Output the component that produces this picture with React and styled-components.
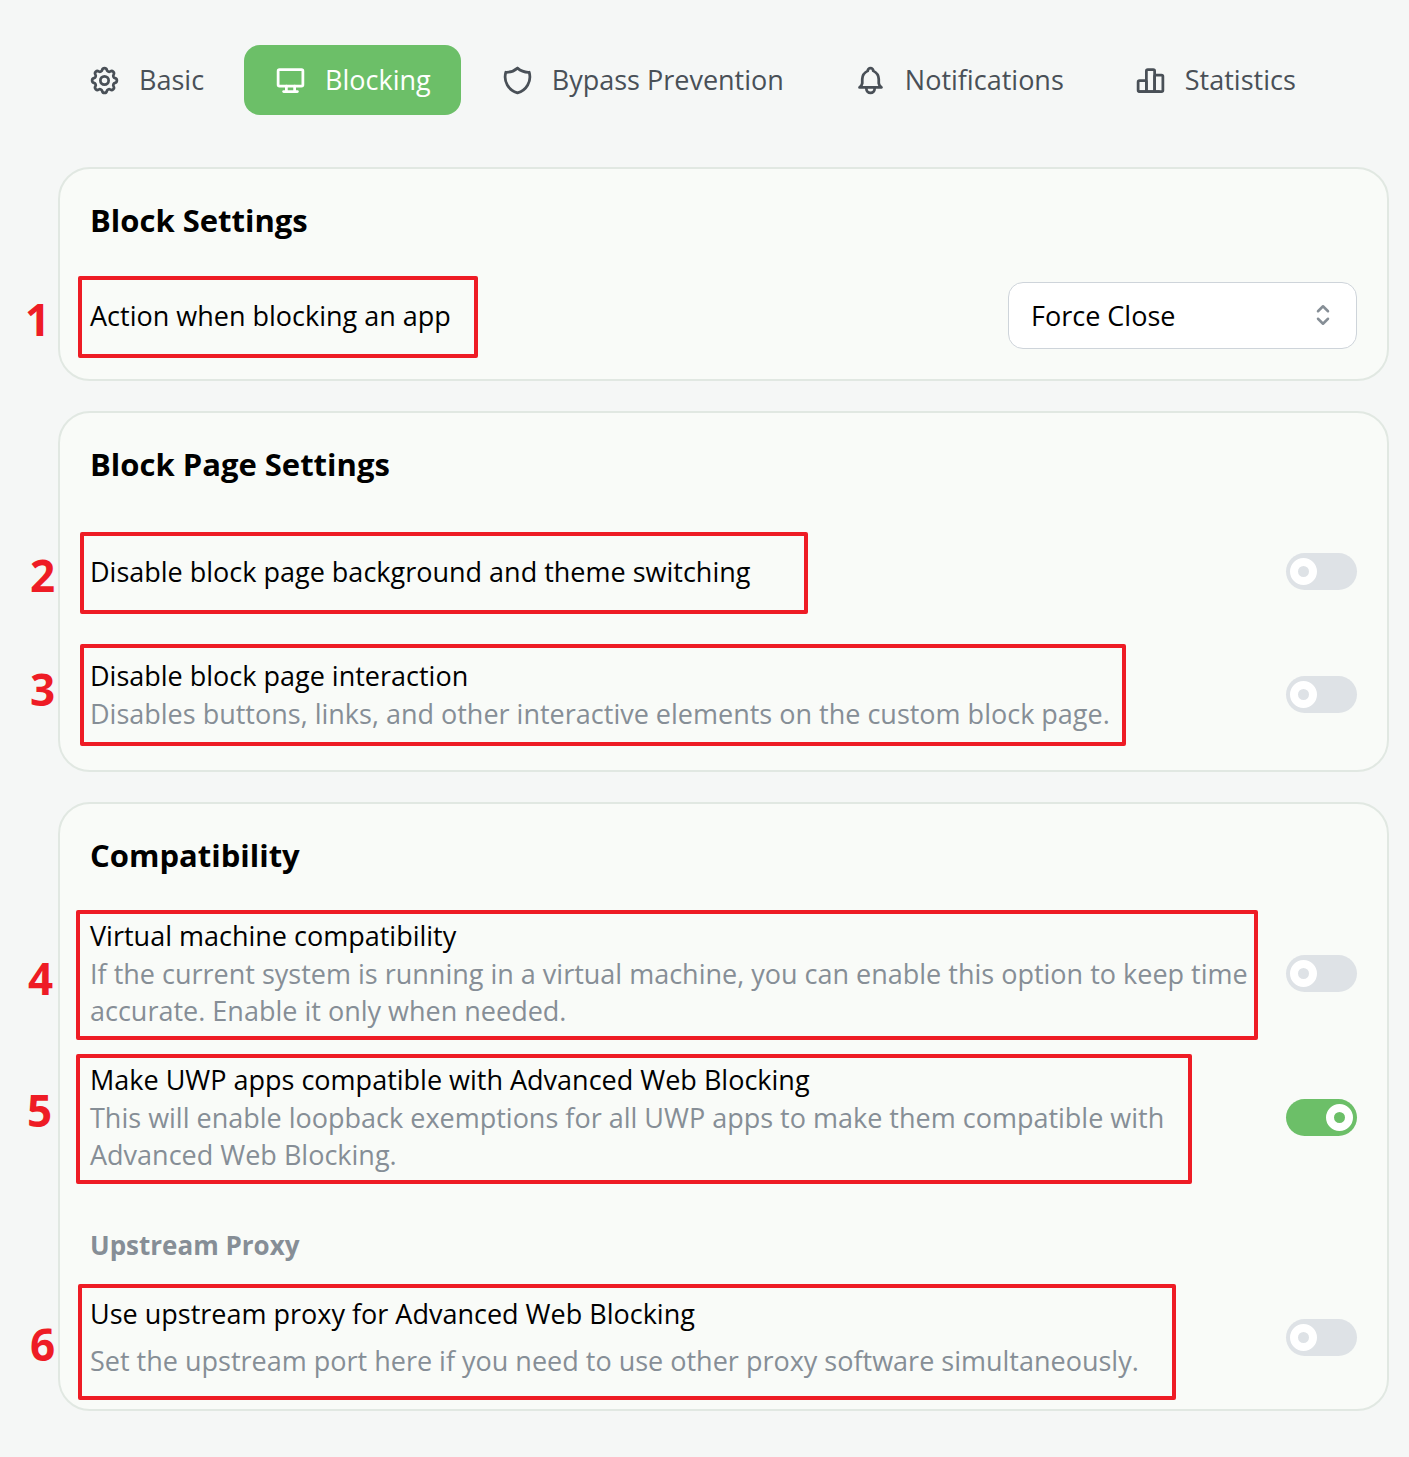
import React, { useState } from "react";
import styled, { createGlobalStyle } from "styled-components";
import {
  TbSettings,
  TbDeviceDesktop,
  TbShield,
  TbBell,
  TbChartBar,
  TbSelector,
} from "react-icons/tb";

const GlobalStyle = createGlobalStyle`
  *,
  *::before {
    box-sizing: border-box;
  }
  body {
    margin: 0;
    background: #f5f7f6;
    color: #000;
    font-family: "Segoe UI", "Open Sans", "Noto Sans", sans-serif;
    font-size: 27px;
    line-height: 38px;
  }
  button,
  select {
    font: inherit;
  }
`;

const Page = styled.main`
  padding: 45px 20px 46px 58px;
`;

const Tabs = styled.nav`
  display: flex;
  gap: 10px;
  margin-bottom: 52px;
`;

const Tab = styled.button`
  display: flex;
  align-items: center;
  gap: 18px;
  height: 70px;
  padding: 0 30px;
  border: 0;
  border-radius: 16px;
  background: ${({ $active }) => ($active ? "#6cbf68" : "transparent")};
  color: ${({ $active }) => ($active ? "#fff" : "#495057")};
  white-space: nowrap;
  cursor: pointer;
  svg {
    flex: none;
    width: 33px;
    height: 33px;
  }
`;

const Sections = styled.div`
  display: flex;
  flex-direction: column;
  gap: 30px;
`;

const Card = styled.section`
  padding: 30px;
  border: 2px solid #e1e8e2;
  border-radius: 32px;
  background: #f9fbf8;
`;

const CardTitle = styled.h2`
  margin: 0 0 41px;
  font-size: 31px;
  font-weight: 700;
  line-height: 42px;
`;

const GroupTitle = styled.h3`
  margin: 53px 0 31px;
  color: #868e96;
  font-size: 26px;
  font-weight: 700;
  line-height: 38px;
`;

const Rows = styled.div`
  display: flex;
  flex-direction: column;
  gap: 32px;
`;

const Row = styled.div`
  position: relative;
  display: flex;
  align-items: center;
  justify-content: space-between;
  gap: 24px;
  min-height: ${({ $tall }) => ($tall ? "91px" : "0")};
`;

const RowText = styled.div`
  flex: 1;
  min-width: 0;
  label {
    display: block;
  }
`;

const Description = styled.p`
  margin: ${({ $spaced }) => ($spaced ? "9px" : "0")} 0 0;
  color: #868e96;
  line-height: 37px;
`;

const SelectWrap = styled.div`
  position: relative;
  width: 349px;
  svg {
    position: absolute;
    top: 18px;
    right: 19px;
    width: 30px;
    height: 30px;
    color: #868e96;
    pointer-events: none;
  }
`;

const Select = styled.select`
  display: block;
  appearance: none;
  width: 100%;
  height: 67px;
  padding: 0 60px 0 22px;
  border: 1px solid #ced4da;
  border-radius: 15px;
  background: #fff;
  color: #000;
`;

const Switch = styled.input.attrs({ type: "checkbox", role: "switch" })`
  appearance: none;
  flex: none;
  display: flex;
  align-items: center;
  width: 71px;
  height: 37px;
  margin: 0;
  padding: 0 4px;
  border-radius: 19px;
  background: #dee2e6;
  cursor: pointer;
  &::before {
    content: "";
    width: 27px;
    height: 27px;
    border: 8px solid #fff;
    border-radius: 50%;
  }
  &:checked {
    justify-content: flex-end;
    background: #6cbf68;
  }
`;

/* Numbered red markers drawn over the rows */
const MarkBox = styled.div`
  position: absolute;
  top: ${({ $box }) => $box.top}px;
  left: ${({ $box }) => $box.left}px;
  width: ${({ $box }) => $box.width}px;
  height: ${({ $box }) => $box.height}px;
  border: 4px solid #ee1c25;
  border-radius: 2px;
  pointer-events: none;
`;

const MarkNumber = styled.span`
  position: absolute;
  top: ${({ $at }) => $at.top}px;
  left: ${({ $at }) => $at.left}px;
  color: #ee1c25;
  font-size: 44px;
  font-weight: 700;
  line-height: 58px;
  pointer-events: none;
`;

const tabs = [
  { name: "Basic", Icon: TbSettings },
  { name: "Blocking", Icon: TbDeviceDesktop },
  { name: "Bypass Prevention", Icon: TbShield },
  { name: "Notifications", Icon: TbBell },
  { name: "Statistics", Icon: TbChartBar },
];

const Mark = ({ number, box, at }) => (
  <>
    <MarkBox $box={box} />
    <MarkNumber $at={at}>{number}</MarkNumber>
  </>
);

const SwitchRow = ({ id, label, description, spaced, tall, on, mark }) => {
  const [checked, setChecked] = useState(Boolean(on));

  return (
    <Row $tall={tall}>
      <RowText>
        <label htmlFor={id}>{label}</label>
        {description ? (
          <Description $spaced={spaced}>{description}</Description>
        ) : null}
      </RowText>
      <Switch
        id={id}
        checked={checked}
        onChange={() => setChecked(!checked)}
      />
      <Mark {...mark} />
    </Row>
  );
};

const App = () => {
  const [active, setActive] = useState("Blocking");
  const [action, setAction] = useState("Force Close");

  return (
    <>
      <GlobalStyle />
      <Page>
        <Tabs>
          {tabs.map(({ name, Icon }) => (
            <Tab
              key={name}
              type="button"
              $active={active === name}
              onClick={() => setActive(name)}
            >
              <Icon />
              {name}
            </Tab>
          ))}
        </Tabs>
        <Sections>
          <Card>
            <CardTitle>Block Settings</CardTitle>
            <Row>
              <RowText>
                <label htmlFor="action">Action when blocking an app</label>
              </RowText>
              <SelectWrap>
                <Select
                  id="action"
                  value={action}
                  onChange={(e) => setAction(e.target.value)}
                >
                  <option>Force Close</option>
                  <option>Minimize</option>
                </Select>
                <TbSelector />
              </SelectWrap>
              <Mark
                number={1}
                box={{ top: -6, left: -12, width: 400, height: 82 }}
                at={{ top: 8, left: -65 }}
              />
            </Row>
          </Card>
          <Card>
            <CardTitle>Block Page Settings</CardTitle>
            <Rows>
              <SwitchRow
                id="theme"
                tall
                label="Disable block page background and theme switching"
                mark={{
                  number: 2,
                  box: { top: 6, left: -10, width: 728, height: 82 },
                  at: { top: 20, left: -60 },
                }}
              />
              <SwitchRow
                id="interaction"
                tall
                label="Disable block page interaction"
                description="Disables buttons, links, and other interactive elements on the custom block page."
                mark={{
                  number: 3,
                  box: { top: -5, left: -10, width: 1046, height: 102 },
                  at: { top: 11, left: -60 },
                }}
              />
            </Rows>
          </Card>
          <Card>
            <CardTitle>Compatibility</CardTitle>
            <Rows>
              <SwitchRow
                id="vm"
                label="Virtual machine compatibility"
                description="If the current system is running in a virtual machine, you can enable this option to keep time accurate. Enable it only when needed."
                mark={{
                  number: 4,
                  box: { top: -7, left: -14, width: 1182, height: 130 },
                  at: { top: 32, left: -62 },
                }}
              />
              <SwitchRow
                id="uwp"
                on
                label="Make UWP apps compatible with Advanced Web Blocking"
                description="This will enable loopback exemptions for all UWP apps to make them compatible with Advanced Web Blocking."
                mark={{
                  number: 5,
                  box: { top: -7, left: -14, width: 1116, height: 130 },
                  at: { top: 20, left: -63 },
                }}
              />
            </Rows>
            <GroupTitle>Upstream Proxy</GroupTitle>
            <SwitchRow
              id="proxy"
              spaced
              label="Use upstream proxy for Advanced Web Blocking"
              description="Set the upstream port here if you need to use other proxy software simultaneously."
              mark={{
                number: 6,
                box: { top: -11, left: -12, width: 1098, height: 116 },
                at: { top: 20, left: -60 },
              }}
            />
          </Card>
        </Sections>
      </Page>
    </>
  );
};

export default App;
